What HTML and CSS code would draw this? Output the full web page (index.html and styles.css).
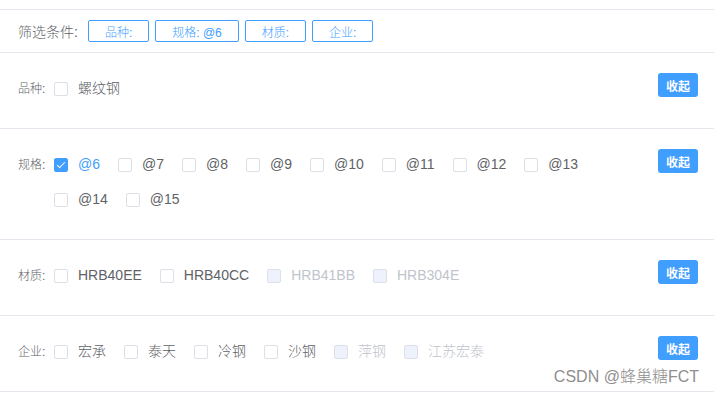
FILE: index.html
```html
<!DOCTYPE html>
<html lang="zh-CN">
<head>
<meta charset="utf-8">
<title>筛选</title>
<link rel="stylesheet" href="styles.css">
</head>
<body>
<div class="page">
  <div class="summary">
    <span class="summary-label">筛选条件:</span>
    <span class="tag">品种:</span>
    <span class="tag">规格: @6</span>
    <span class="tag">材质:</span>
    <span class="tag">企业:</span>
  </div>

  <div class="section">
    <div class="section-label">品种:</div>
    <div class="options">
      <label class="opt"><span class="box"></span><span class="txt">螺纹钢</span></label>
    </div>
    <button class="btn">收起</button>
  </div>

  <div class="section">
    <div class="section-label">规格:</div>
    <div class="options">
      <label class="opt checked"><span class="box"></span><span class="txt">@6</span></label>
      <label class="opt"><span class="box"></span><span class="txt">@7</span></label>
      <label class="opt"><span class="box"></span><span class="txt">@8</span></label>
      <label class="opt"><span class="box"></span><span class="txt">@9</span></label>
      <label class="opt"><span class="box"></span><span class="txt">@10</span></label>
      <label class="opt"><span class="box"></span><span class="txt">@11</span></label>
      <label class="opt"><span class="box"></span><span class="txt">@12</span></label>
      <label class="opt"><span class="box"></span><span class="txt">@13</span></label>
      <label class="opt"><span class="box"></span><span class="txt">@14</span></label>
      <label class="opt"><span class="box"></span><span class="txt">@15</span></label>
    </div>
    <button class="btn">收起</button>
  </div>

  <div class="section">
    <div class="section-label">材质:</div>
    <div class="options">
      <label class="opt"><span class="box"></span><span class="txt">HRB40EE</span></label>
      <label class="opt"><span class="box"></span><span class="txt">HRB40CC</span></label>
      <label class="opt disabled"><span class="box"></span><span class="txt">HRB41BB</span></label>
      <label class="opt disabled"><span class="box"></span><span class="txt">HRB304E</span></label>
    </div>
    <button class="btn">收起</button>
  </div>

  <div class="section">
    <div class="section-label">企业:</div>
    <div class="options">
      <label class="opt"><span class="box"></span><span class="txt">宏承</span></label>
      <label class="opt"><span class="box"></span><span class="txt">泰天</span></label>
      <label class="opt"><span class="box"></span><span class="txt">冷钢</span></label>
      <label class="opt"><span class="box"></span><span class="txt">沙钢</span></label>
      <label class="opt disabled"><span class="box"></span><span class="txt">萍钢</span></label>
      <label class="opt disabled"><span class="box"></span><span class="txt">江苏宏泰</span></label>
    </div>
    <button class="btn">收起</button>
  </div>

  <div class="watermark">CSDN @蜂巢糖FCT</div>
</div>
</body>
</html>
```

FILE: styles.css
```css
* { box-sizing: border-box; }
html, body {
  margin: 0;
  padding: 0;
  background: #fff;
}
body {
  font-family: "Liberation Sans", "Noto Sans CJK SC", sans-serif;
  font-weight: 300;
  color: #606266;
}
.page {
  position: relative;
  padding-top: 9px;
  width: 714px;
  height: 396px;
  overflow: hidden;
}
.summary {
  display: flex;
  align-items: center;
  gap: 6px;
  height: 44px;
  padding-left: 18px;
  border-top: 1px solid #e4e7ed;
  border-bottom: 1px solid #e4e7ed;
}
.summary-label {
  font-size: 14px;
  color: #606266;
  margin-right: 4px;
}
.tag {
  display: inline-flex;
  align-items: center;
  justify-content: center;
  height: 22px;
  padding: 0 16px;
  border: 1px solid #409eff;
  border-radius: 2px;
  font-size: 12px;
  color: #409eff;
}
.section {
  display: flex;
  align-items: flex-start;
  padding: 18px 16px 22px 18px;
  border-bottom: 1px solid #e4e7ed;
}
.section-label {
  width: 36px;
  flex: none;
  height: 35px;
  line-height: 36px;
  font-size: 12px;
  color: #606266;
}
.options {
  flex: 1;
  display: flex;
  flex-wrap: wrap;
}
.opt {
  display: flex;
  align-items: center;
  height: 35px;
  margin-right: 18px;
  font-size: 14px;
  color: #606266;
}
.txt {
  line-height: 16px;
  margin-top: -2px;
}
.box {
  position: relative;
  width: 14px;
  height: 14px;
  border: 1px solid #dcdfe6;
  border-radius: 2px;
  background: #fff;
  margin-right: 10px;
  flex: none;
}
.opt.checked .box {
  background: #409eff;
  border-color: #409eff;
}
.opt.checked .box::after {
  content: "";
  position: absolute;
  left: 4px;
  top: 1px;
  width: 3px;
  height: 7px;
  border: 1px solid #fff;
  border-left: 0;
  border-top: 0;
  transform: rotate(45deg);
}
.opt.checked .txt { color: #409eff; }
.opt.disabled .box {
  background: #edf2fc;
  border-color: #dcdfe6;
}
.opt.disabled .txt { color: #c0c4cc; }
.btn {
  flex: none;
  margin-top: 2px;
  margin-left: 20px;
  width: 40px;
  height: 24px;
  padding: 0;
  border: 0;
  border-radius: 3px;
  background: #409eff;
  color: #fff;
  font-family: inherit;
  font-size: 12px;
  font-weight: bold;
}
.watermark {
  position: absolute;
  right: 15px;
  top: 366px;
  font-size: 16px;
  line-height: 22px;
  color: #8e8e8e;
}
```
